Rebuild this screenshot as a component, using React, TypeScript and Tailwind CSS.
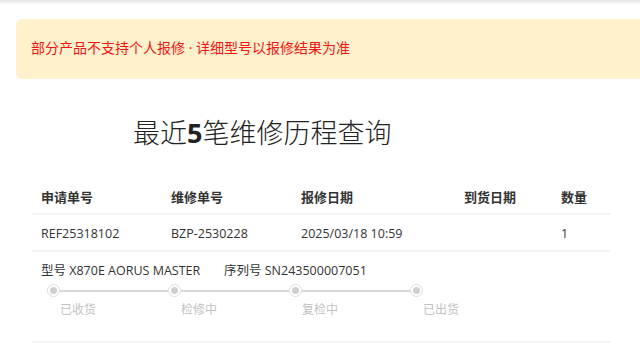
import React from 'react';

const columns = [
  { key: 'apply', label: '申请单号', width: 'w-[130px]' },
  { key: 'repair', label: '维修单号', width: 'w-[130px]' },
  { key: 'date', label: '报修日期', width: 'w-[163px]' },
  { key: 'arrive', label: '到货日期', width: 'w-[97px]' },
  { key: 'qty', label: '数量', width: 'w-[58px]' },
];

const record: Record<string, string> = {
  apply: 'REF25318102',
  repair: 'BZP-2530228',
  date: '2025/03/18 10:59',
  arrive: '',
  qty: '1',
};

const steps = ['已收货', '检修中', '复检中', '已出货'];

const StepDot = () => (
  <div className="w-[13px] h-[13px] rounded-full border border-[#dcdcdc] bg-white flex items-center justify-center shrink-0">
    <div className="w-[7px] h-[7px] rounded-full bg-[#cfcfcf]" />
  </div>
);

const App: React.FC = () => {
  return (
    <div
      className="w-[640px] h-[360px] overflow-hidden bg-white text-[#333]"
      style={{ fontFamily: '"Open Sans", "Noto Sans CJK SC", sans-serif' }}
    >
      {/* header shadow */}
      <div className="h-[5px] bg-gradient-to-b from-[#e6e6e6] to-white" />

      {/* notice */}
      <div className="ml-4 mt-[14px] w-[700px] h-[60px] rounded-[6px] bg-[#fff1cc] flex items-center pl-[15px]">
        <span className="text-[14px] text-[#f01414] -mt-[3px]">部分产品不支持个人报修 · 详细型号以报修结果为准</span>
      </div>

      {/* title */}
      <h1 className="mt-[34px] pl-[133px] text-[27px] leading-[40px] font-light text-[#222] whitespace-nowrap">
        最近<span className="font-bold">5</span>笔维修历程查询
      </h1>

      {/* table */}
      <div className="ml-8 w-[578px] mt-[28px]">
        <div className="flex h-[34px] items-center border-b-2 border-[#f3f3f3]">
          {columns.map((c) => (
            <div key={c.key} className={`${c.width} pl-[9px] text-[13px] font-bold leading-[20px]`}>
              {c.label}
            </div>
          ))}
        </div>
        <div className="flex h-[37px] items-center pt-[3px] border-b-2 border-[#f3f3f3]">
          {columns.map((c) => (
            <div key={c.key} className={`${c.width} pl-[9px] text-[12.5px] leading-[20px]`}>
              {record[c.key]}
            </div>
          ))}
        </div>

        {/* detail */}
        <div className="h-[91px] border-b-2 border-[#f3f3f3] pl-[9px] pt-[9px]">
          <div className="flex text-[12.5px] leading-[20px]">
            <span className="w-[183px]">型号 X870E AORUS MASTER</span>
            <span>序列号 SN243500007051</span>
          </div>
          <div className="flex items-center pl-[6px] mt-[3px]">
            {steps.map((s, i) => (
              <div key={s} className="flex items-center">
                <StepDot />
                {i < steps.length - 1 && <div className="w-[108px] h-[2px] bg-[#d9d9d9]" />}
              </div>
            ))}
          </div>
          <div className="flex pl-[19px] mt-[5px]">
            {steps.map((s) => (
              <div key={s} className="w-[121px] text-[12px] leading-[16px] text-[#c2c2c2]">
                {s}
              </div>
            ))}
          </div>
        </div>
      </div>
    </div>
  );
};

export default App;
